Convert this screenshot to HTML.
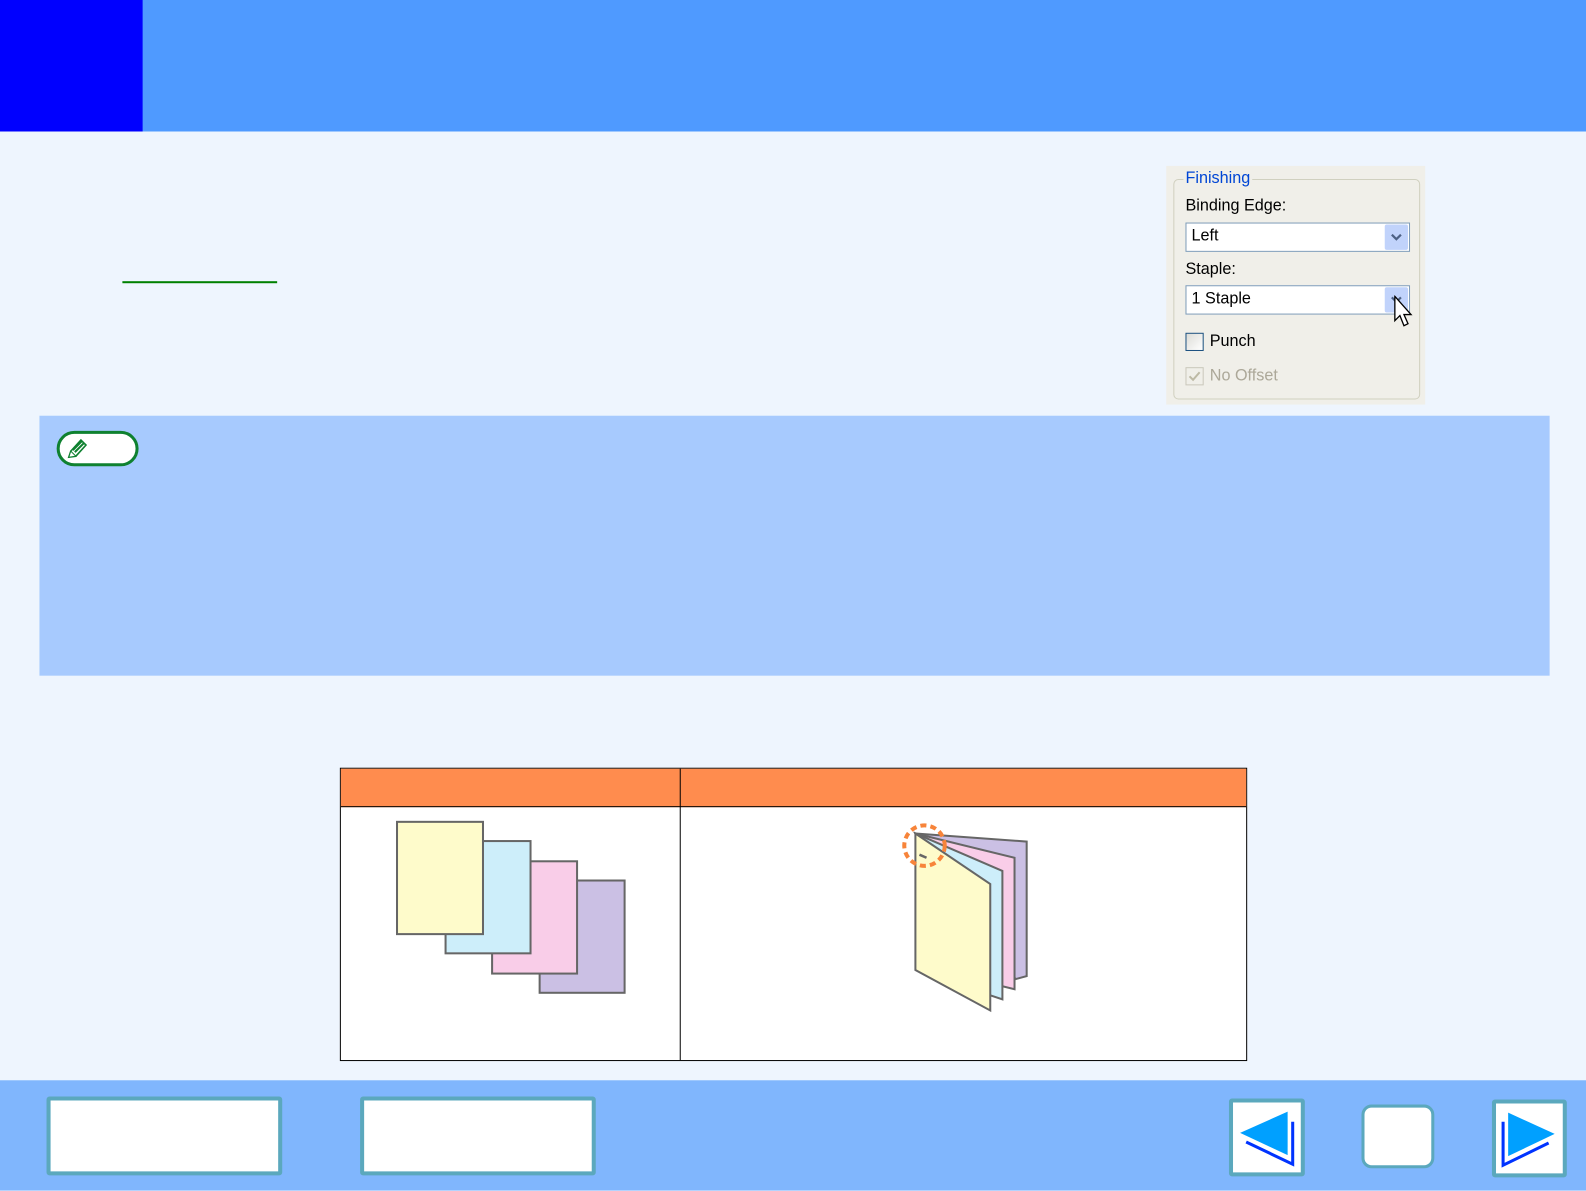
<!DOCTYPE html>
<html><head><meta charset="utf-8"><style>
html,body{margin:0;padding:0;width:1586px;height:1190px;overflow:hidden;background:#eef5fe;font-family:"Liberation Sans",sans-serif}
#w{position:absolute;left:0;top:0;width:1568px;height:1177px;transform:scale(1.0115);transform-origin:0 0}
.a{position:absolute}
.btn{position:absolute;background:#fff;border:4px solid #5ba8bd;border-radius:3px;box-sizing:border-box}
</style></head><body><div id="w">
<div class="a" style="left:0;top:0;width:1568px;height:130px;background:#4f9aff"></div>
<div class="a" style="left:0;top:0;width:141px;height:130px;background:#0000ff"></div>
<div class="a" style="left:121px;top:278px;width:153px;height:2px;background:#008000"></div>

<div class="a" style="left:1153px;top:164px;width:256px;height:236px;background:#f0efe9"></div>
<div class="a" style="left:1160px;top:177px;width:244px;height:218px;border:1px solid #d0d0bf;border-radius:5px;box-sizing:border-box"></div>
<div class="a" style="left:1170px;top:168px;padding:0 2px;background:#f0efe9;color:#0046d5;font-size:16px">Finishing</div>
<div class="a" style="left:1172px;top:195px;font-size:16px;color:#000">Binding Edge:</div>
<div class="a" style="left:1172px;top:220px;width:222px;height:29px;background:#fff;border:1px solid #7f9db9;box-sizing:border-box;font-size:16px;padding:4px 5px">Left</div>
<div class="a" style="left:1369px;top:222px;width:23px;height:25px;background:#c1d3fb;border-radius:2px"></div>
<svg class="a" style="left:1369px;top:222px" width="23" height="25"><path d="M7 10 L11.5 14.5 L16 10" fill="none" stroke="#4d6185" stroke-width="2.2"/></svg>
<div class="a" style="left:1172px;top:258px;font-size:16px;color:#000">Staple:</div>
<div class="a" style="left:1172px;top:282px;width:222px;height:29px;background:#fff;border:1px solid #7f9db9;box-sizing:border-box;font-size:16px;padding:4px 5px">1 Staple</div>
<div class="a" style="left:1369px;top:284px;width:23px;height:25px;background:#c1d3fb;border-radius:2px"></div>
<svg class="a" style="left:1369px;top:284px" width="23" height="25"><path d="M7 10 L11.5 14.5 L16 10" fill="none" stroke="#4d6185" stroke-width="2.2"/></svg>
<svg class="a" style="left:1378px;top:292px" width="22" height="36"><path d="M1 1 L1 25 L6 20 L10 30 L14 28 L10 19 L17 19 Z" fill="#fff" stroke="#000" stroke-width="1.3"/></svg>
<div class="a" style="left:1172px;top:329px;width:18px;height:18px;border:1px solid #1c5180;box-sizing:border-box;background:linear-gradient(135deg,#dcdcd7,#fff)"></div>
<div class="a" style="left:1196px;top:329px;font-size:16px">Punch</div>
<div class="a" style="left:1172px;top:363px;width:18px;height:18px;border:1px solid #cac8bb;box-sizing:border-box"></div>
<svg class="a" style="left:1172px;top:363px" width="18" height="18"><path d="M4 9 L7.5 12.5 L14 5" fill="none" stroke="#bdbaa5" stroke-width="2"/></svg>
<div class="a" style="left:1196px;top:363px;font-size:16px;color:#aca899">No Offset</div>

<div class="a" style="left:39px;top:411px;width:1493px;height:257px;background:#a7cafe"></div>
<div class="a" style="left:56px;top:426px;width:81px;height:35px;background:#fff;border:3px solid #0f8130;border-radius:18px;box-sizing:border-box"></div>
<svg class="a" style="left:64px;top:431px" width="28" height="26"><path d="M4 21 L6 15 L16 4 L21 9 L11 20 Z" fill="#fff" stroke="#0f8130" stroke-width="1.6"/><path d="M8 14 L17 5 M10 16 L19 7" stroke="#0f8130" stroke-width="2"/><path d="M4 21 L6 15 L11 20 Z" fill="#fff" stroke="#0f8130" stroke-width="1"/></svg>

<div class="a" style="left:336px;top:759px;width:897px;height:290px;border:1px solid #000;box-sizing:border-box;background:#fff"></div>
<div class="a" style="left:337px;top:760px;width:895px;height:37px;background:#ff8c4e;border-bottom:1px solid #000"></div>
<div class="a" style="left:672px;top:760px;width:1px;height:288px;background:#000"></div>

<svg class="a" style="left:380px;top:800px" width="260" height="200">
<rect x="153.5" y="70.5" width="84" height="111" fill="#cbc0e4" stroke="#666" stroke-width="2"/>
<rect x="106.5" y="51.5" width="84" height="111" fill="#f9cde8" stroke="#666" stroke-width="2"/>
<rect x="60.5" y="31.5" width="84" height="111" fill="#cdeefa" stroke="#666" stroke-width="2"/>
<rect x="12.5" y="12.5" width="85" height="111" fill="#fefbcb" stroke="#666" stroke-width="2"/>
</svg>
<svg class="a" style="left:880px;top:810px" width="150" height="200">
<path d="M25 14 L135 22 L135 155 L124 158 Z" fill="#cbc0e4" stroke="#666" stroke-width="2"/>
<path d="M25 14 L123 38 L123 168 L111 165 Z" fill="#f9cde8" stroke="#666" stroke-width="2"/>
<path d="M25 14 L111 51 L111 178 L99 174 Z" fill="#cdeefa" stroke="#666" stroke-width="2"/>
<path d="M25 14 L99 64 L99 189 L25 149 Z" fill="#fefbcb" stroke="#666" stroke-width="2"/>
<path d="M29 35 L36 38" stroke="#666" stroke-width="2.5"/>
<circle cx="34" cy="26" r="20" fill="none" stroke="#f7843a" stroke-width="4" stroke-dasharray="6 4"/>
</svg>

<div class="a" style="left:0;top:1068px;width:1568px;height:109px;background:#80b6fd"></div>
<div class="btn" style="left:46px;top:1084px;width:233px;height:78px"></div>
<div class="btn" style="left:356px;top:1084px;width:233px;height:78px"></div>
<div class="btn" style="left:1215px;top:1086px;width:75px;height:77px"></div>
<svg class="a" style="left:1215px;top:1086px" width="75" height="77"><path d="M11 34 L58 13 L58 56 Z" fill="#00a0ff"/><path d="M17 43 L63 65 L63 23" fill="none" stroke="#0033ff" stroke-width="3"/></svg>
<div class="btn" style="left:1346px;top:1092px;width:72px;height:63px;border-width:3px;border-radius:10px"></div>
<div class="btn" style="left:1475px;top:1087px;width:74px;height:77px"></div>
<svg class="a" style="left:1475px;top:1087px" width="74" height="77"><path d="M62 34 L16 13 L16 56 Z" fill="#00a0ff"/><path d="M11 22 L11 65 L56 43" fill="none" stroke="#0033ff" stroke-width="3"/></svg>
</div></body></html>
